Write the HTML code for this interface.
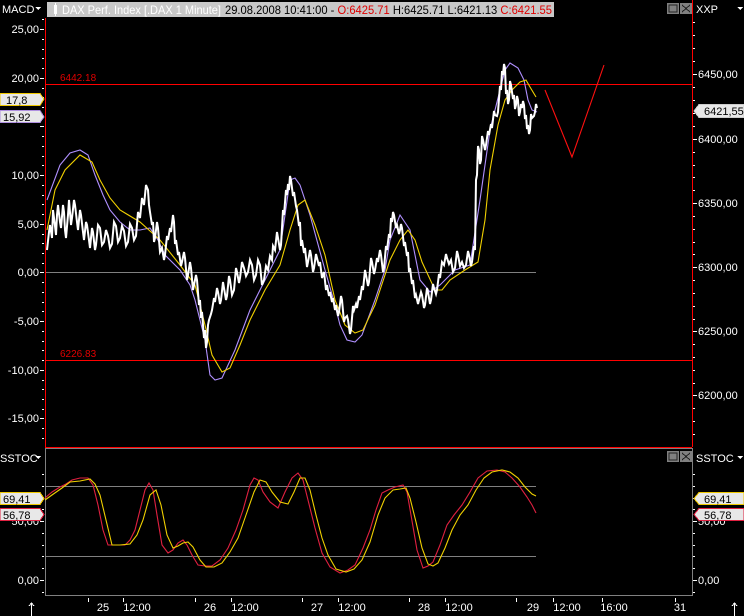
<!DOCTYPE html>
<html><head><meta charset="utf-8"><style>
html,body{margin:0;padding:0;background:#000;width:744px;height:616px;overflow:hidden}
svg{display:block}
text{font-family:"Liberation Sans",sans-serif;font-size:11px;fill:#fff}
</style></head><body>
<svg width="744" height="616" viewBox="0 0 744 616" xmlns="http://www.w3.org/2000/svg" shape-rendering="crispEdges">
<rect width="744" height="616" fill="#000"/>
<!-- title bar -->
<rect x="47" y="2" width="507" height="15" fill="#c8c8c8"/>
<rect x="54" y="5" width="3" height="9" fill="#fff"/><rect x="55" y="3" width="1" height="13" fill="#fff"/>
<text x="62" y="14" style="fill:#fff;font-size:12px" textLength="159" lengthAdjust="spacingAndGlyphs">DAX Perf. Index [.DAX  1 Minute]</text>
<text x="225" y="14" style="fill:#000;font-size:12px" textLength="327" lengthAdjust="spacingAndGlyphs">29.08.2008 10:41:00 - <tspan fill="#e00000">O:6425.71</tspan> H:6425.71 L:6421.13 <tspan fill="#e00000">C:6421.55</tspan></text>
<!-- window buttons -->
<rect x="667" y="3" width="12" height="11" fill="#808080"/><rect x="669" y="5" width="8" height="7" fill="none" stroke="#222"/>
<rect x="680" y="3" width="12" height="11" fill="#808080"/><path d="M682 5 L690 12 M690 5 L682 12" stroke="#222"/>
<rect x="667" y="451" width="12" height="11" fill="#808080"/><rect x="669" y="453" width="8" height="7" fill="none" stroke="#222"/>
<rect x="680" y="451" width="12" height="11" fill="#808080"/><path d="M682 453 L690 460 M690 453 L682 460" stroke="#222"/>
<!-- pane labels -->
<text x="2" y="13">MACD</text><path d="M35 7 L41 7 L38 10 Z" fill="#fff"/>
<text x="696" y="13">XXP</text><path d="M737 7 L743 7 L740 10 Z" fill="#fff"/>
<text x="0" y="462">SSTOC</text><path d="M35 456 L41 456 L38 459 Z" fill="#fff"/>
<text x="696" y="462">SSTOC</text><path d="M737 456 L743 456 L740 459 Z" fill="#fff"/>
<!-- frames -->
<line x1="45.5" y1="18" x2="45.5" y2="447" stroke="#f00"/>
<line x1="692.5" y1="0" x2="692.5" y2="447" stroke="#f00"/>
<line x1="45" y1="447.5" x2="692" y2="447.5" stroke="#f00"/>
<rect x="45.5" y="448.5" width="647" height="147" fill="none" stroke="#808080"/>
<g stroke="#fff">
<path d="M40 29.5h4M40 78.5h4M40 126.5h4M40 175.5h4M40 224.5h4M40 272.5h4M40 321.5h4M40 370.5h4M40 418.5h4"/>
<path d="M42 19.5h2M42 39.5h2M42 49.5h2M42 58.5h2M42 68.5h2M42 88.5h2M42 97.5h2M42 107.5h2M42 117.5h2M42 136.5h2M42 146.5h2M42 156.5h2M42 165.5h2M42 185.5h2M42 195.5h2M42 204.5h2M42 214.5h2M42 234.5h2M42 243.5h2M42 253.5h2M42 263.5h2M42 282.5h2M42 292.5h2M42 302.5h2M42 311.5h2M42 331.5h2M42 341.5h2M42 350.5h2M42 360.5h2M42 380.5h2M42 389.5h2M42 399.5h2M42 409.5h2M42 428.5h2M42 438.5h2"/>
<path d="M693 74.5h4M693 139.5h4M693 203.5h4M693 267.5h4M693 331.5h4M693 395.5h4"/>
<path d="M693 22.5h2M693 35.5h2M693 48.5h2M693 61.5h2M693 87.5h2M693 100.5h2M693 113.5h2M693 126.5h2M693 152.5h2M693 165.5h2M693 177.5h2M693 190.5h2M693 216.5h2M693 229.5h2M693 242.5h2M693 254.5h2M693 280.5h2M693 293.5h2M693 306.5h2M693 319.5h2M693 344.5h2M693 357.5h2M693 370.5h2M693 383.5h2M693 408.5h2M693 421.5h2M693 434.5h2"/>
<path d="M40 580.5h4M40 521.5h4"/>
<path d="M42 474.5h2M42 486.5h2M42 498.5h2M42 509.5h2M42 533.5h2M42 545.5h2M42 556.5h2M42 568.5h2M42 592.5h2"/>
<path d="M693 580.5h4M693 521.5h4"/>
<path d="M693 474.5h2M693 486.5h2M693 498.5h2M693 509.5h2M693 533.5h2M693 545.5h2M693 556.5h2M693 568.5h2M693 592.5h2"/>
</g>
<g text-anchor="end">
<text x="39" y="33">25,00</text><text x="39" y="82">20,00</text><text x="39" y="179">10,00</text><text x="39" y="228">5,00</text><text x="39" y="276">0,00</text><text x="39" y="325">-5,00</text><text x="39" y="374">-10,00</text><text x="39" y="422">-15,00</text>
<text x="39" y="525">50,00</text><text x="39" y="584">0,00</text>
</g>
<text x="698" y="78">6450,00</text><text x="698" y="143">6400,00</text><text x="698" y="207">6350,00</text><text x="698" y="271">6300,00</text><text x="698" y="335">6250,00</text><text x="698" y="399">6200,00</text>
<text x="698" y="525">50,00</text><text x="698" y="584">0,00</text>
<!-- badges -->
<path d="M0 93.5 H40 L44 99 L40 105.5 H0Z" fill="#e8e8e8" stroke="#f0c800"/><text x="6" y="104" style="fill:#000">17,8</text>
<path d="M0 110.5 H40 L44 117 L40 122.5 H0Z" fill="#e8e8e8" stroke="#b090e0"/><text x="3" y="121" style="fill:#000">15,92</text>
<path d="M744 104.5 H699 L694 111 L699 117.5 H744Z" fill="#e8e8e8" stroke="#ccc"/><text x="704" y="115" style="fill:#000">6421,55</text>
<path d="M0 492.5 H40 L44 498.5 L40 504.5 H0Z" fill="#e8e8e8" stroke="#f0c800"/><text x="3" y="503" style="fill:#000">69,41</text>
<path d="M0 508.5 H40 L44 514.5 L40 520.5 H0Z" fill="#e8e8e8" stroke="#e02040"/><text x="3" y="519" style="fill:#000">56,78</text>
<path d="M744 492.5 H699 L694 498.5 L699 504.5 H744Z" fill="#e8e8e8" stroke="#f0c800"/><text x="704" y="503" style="fill:#000">69,41</text>
<path d="M744 508.5 H699 L694 514.5 L699 520.5 H744Z" fill="#e8e8e8" stroke="#e02040"/><text x="704" y="519" style="fill:#000">56,78</text>
<!-- horizontal lines -->
<line x1="46" y1="84.5" x2="692" y2="84.5" stroke="#f00"/>
<line x1="46" y1="360.5" x2="692" y2="360.5" stroke="#f00"/>
<text x="60" y="81" style="fill:#e00000;font-size:10px">6442.18</text>
<text x="60" y="357" style="fill:#e00000;font-size:10px">6226.83</text>
<line x1="46" y1="272.5" x2="536" y2="272.5" stroke="#808080"/>
<line x1="46" y1="486.5" x2="536" y2="486.5" stroke="#808080"/>
<line x1="46" y1="556.5" x2="536" y2="556.5" stroke="#808080"/>
<g fill="none" shape-rendering="auto" stroke-width="1.1">
<polyline stroke="#b090ff" points="47,200 60,165 70,153 80,150 88,155 95,175 103,195 110,210 120,222 130,230 140,230 150,228 158,240 165,255 180,270 190,285 195,300 205,340 210,375 215,380 222,378 235,350 250,310 265,280 280,250 285,215 290,180 295,178 300,185 310,215 325,270 335,305 340,325 347,340 355,342 362,335 375,300 385,270 390,240 400,215 410,230 420,280 430,292 440,285 455,270 470,265 480,200 490,130 500,90 505,70 510,63 518,68 524,80 528,100 532,110 537,112"/>
<polyline stroke="#f0d000" points="47,230 55,190 65,170 80,155 92,162 100,180 110,198 120,210 140,222 160,240 180,265 195,285 205,325 212,355 222,372 230,368 240,345 250,320 265,290 280,265 290,230 298,205 305,200 315,225 325,255 335,300 345,325 355,333 363,330 375,305 390,260 400,240 408,230 415,240 422,262 435,290 442,290 450,280 465,270 478,262 485,220 490,170 498,125 505,100 512,90 520,82 526,80 530,87 536,97"/>
<polyline stroke="#fff" stroke-width="2" points="47,250 49,232 50,225 52,238 53,210 55,226 56,235 57,215 58,205 60,222 61,228 63,205 64,212 65,230 66,238 68,215 69,200 71,225 72,218 74,200 75,205 77,222 78,230 80,210 81,215 83,232 84,240 86,222 87,225 89,240 90,248 92,228 93,232 95,250 96,245 98,225 100,228 102,245 104,242 106,230 108,236 110,248 112,244 114,222 116,226 118,242 120,238 122,226 124,231 126,246 128,242 130,224 132,228 134,240 136,236 138,212 140,218 142,198 144,205 146,185 148,190 149,205 150,212 152,225 153,222 154,242 155,238 157,222 158,228 160,252 162,248 164,260 165,255 167,236 168,240 170,228 171,232 173,215 174,222 175,244 176,240 178,255 179,252 181,266 182,262 184,252 185,258 187,280 188,275 190,262 191,268 193,290 194,285 196,275 197,280 199,305 200,300 201,318 202,312 204,338 205,330 206,348 207,342 208,325 209,320 211,314 212,310 214,298 215,302 217,288 218,292 220,304 221,300 223,282 224,288 226,300 227,296 229,276 230,280 232,295 234,290 236,268 237,272 239,283 240,278 242,262 244,268 246,276 248,272 250,260 252,265 254,280 256,275 258,260 260,265 262,285 264,280 266,266 268,270 270,256 272,260 273,246 275,250 277,232 278,238 280,250 281,245 283,210 284,215 286,190 287,195 288,184 289,190 290,176 291,180 293,196 294,192 296,206 297,210 299,226 300,222 301,246 302,240 304,253 305,248 307,267 308,262 310,250 311,255 313,272 314,268 316,254 317,258 319,266 320,262 322,278 324,272 326,290 327,285 329,296 330,292 332,302 333,298 335,310 336,305 338,316 339,312 341,296 342,300 344,322 345,318 347,316 348,320 350,334 351,330 353,306 354,310 356,304 357,308 359,296 360,300 362,286 363,290 365,270 366,275 368,286 369,282 371,258 372,262 374,274 375,270 377,258 378,262 380,250 381,255 383,272 384,268 386,246 387,250 389,234 390,238 391,218 392,222 393,212 394,215 396,228 397,225 399,234 400,230 401,224 402,228 404,246 405,242 407,256 408,252 409,272 410,268 412,284 413,280 415,298 416,295 418,304 419,300 421,292 422,295 424,308 425,305 427,288 428,292 430,304 431,300 433,284 434,288 436,294 437,290 439,274 440,278 442,262 444,265 446,254 447,258 449,264 451,260 453,272 455,268 457,251 458,255 460,266 462,262 464,268 466,265 468,251 469,255 471,266 472,262 474,246 475,250 476,180 477,175 478,146 479,150 480,164 481,160 482,136 483,140 485,150 486,145 488,131 489,135 491,124 492,128 494,111 495,115 497,116 498,112 500,86 501,90 502,71 503,75 504,64 505,68 506,94 507,90 508,104 509,100 510,81 511,85 513,99 514,95 515,109 516,105 517,96 518,100 519,116 520,112 521,104 522,108 523,101 524,105 525,119 526,115 527,129 528,125 529,134 530,130 531,114 532,118 534,116 535,112 536,104 537,108"/>
<polyline stroke="#ff1010" points="545,90 572,157 604,65"/>
<polyline stroke="#e02040" points="45,498 52,492 60,487 66,484 72,480 80,478 88,478 93,485 98,505 103,530 108,545 118,545 125,545 130,540 135,530 140,510 145,490 149,483 153,490 157,515 162,545 168,553 173,550 178,543 183,540 187,545 192,555 198,565 205,566 212,566 220,560 228,548 236,530 243,510 250,485 254,478 258,480 263,492 270,502 278,508 285,492 292,478 298,473 303,480 308,500 315,528 322,553 330,567 340,573 348,570 355,565 363,548 370,530 376,510 382,493 388,490 395,487 403,485 407,492 411,515 417,550 423,568 428,566 433,562 440,545 447,525 454,515 462,505 470,492 478,478 487,471 497,470 505,472 512,478 520,487 527,497 532,505 536,513"/>
<polyline stroke="#f0d000" points="45,500 52,495 62,488 70,482 80,481 90,479 95,484 100,495 106,520 112,545 120,545 130,544 137,535 143,520 150,495 156,490 161,505 167,535 173,548 178,546 183,543 188,542 193,547 200,560 206,567 214,567 222,563 230,552 238,538 246,515 254,492 260,480 266,482 272,492 280,502 288,504 294,492 300,478 305,478 310,490 316,515 322,538 328,555 336,569 346,572 354,569 362,560 370,542 378,515 385,498 393,490 400,489 406,488 410,498 416,522 422,548 428,564 433,566 438,563 445,548 452,530 460,515 468,505 476,490 484,478 492,472 502,470 510,472 518,478 525,487 532,494 536,496"/>
</g>
<!-- time axis -->
<g stroke="#fff"><path d="M88.5 598v4M123.5 598v4M195.5 598v4M231.5 598v4M302.5 598v4M338.5 598v4M409.5 598v4M445.5 598v4M516.5 598v4M553.5 598v4M602.5 598v4M675.5 598v4"/>
<path d="M31.5 603v13M29 606l2.5-3 2.5 3M734.5 603v13M732 606l2.5-3 2.5 3"/></g>
<g text-anchor="middle">
<text x="103" y="611">25</text><text x="137" y="611">12:00</text><text x="210" y="611">26</text><text x="245" y="611">12:00</text><text x="317" y="611">27</text><text x="352" y="611">12:00</text><text x="424" y="611">28</text><text x="459" y="611">12:00</text><text x="533" y="611">29</text><text x="567" y="611">12:00</text><text x="614" y="611">16:00</text><text x="680" y="611">31</text>
</g>
</svg>
</body></html>
